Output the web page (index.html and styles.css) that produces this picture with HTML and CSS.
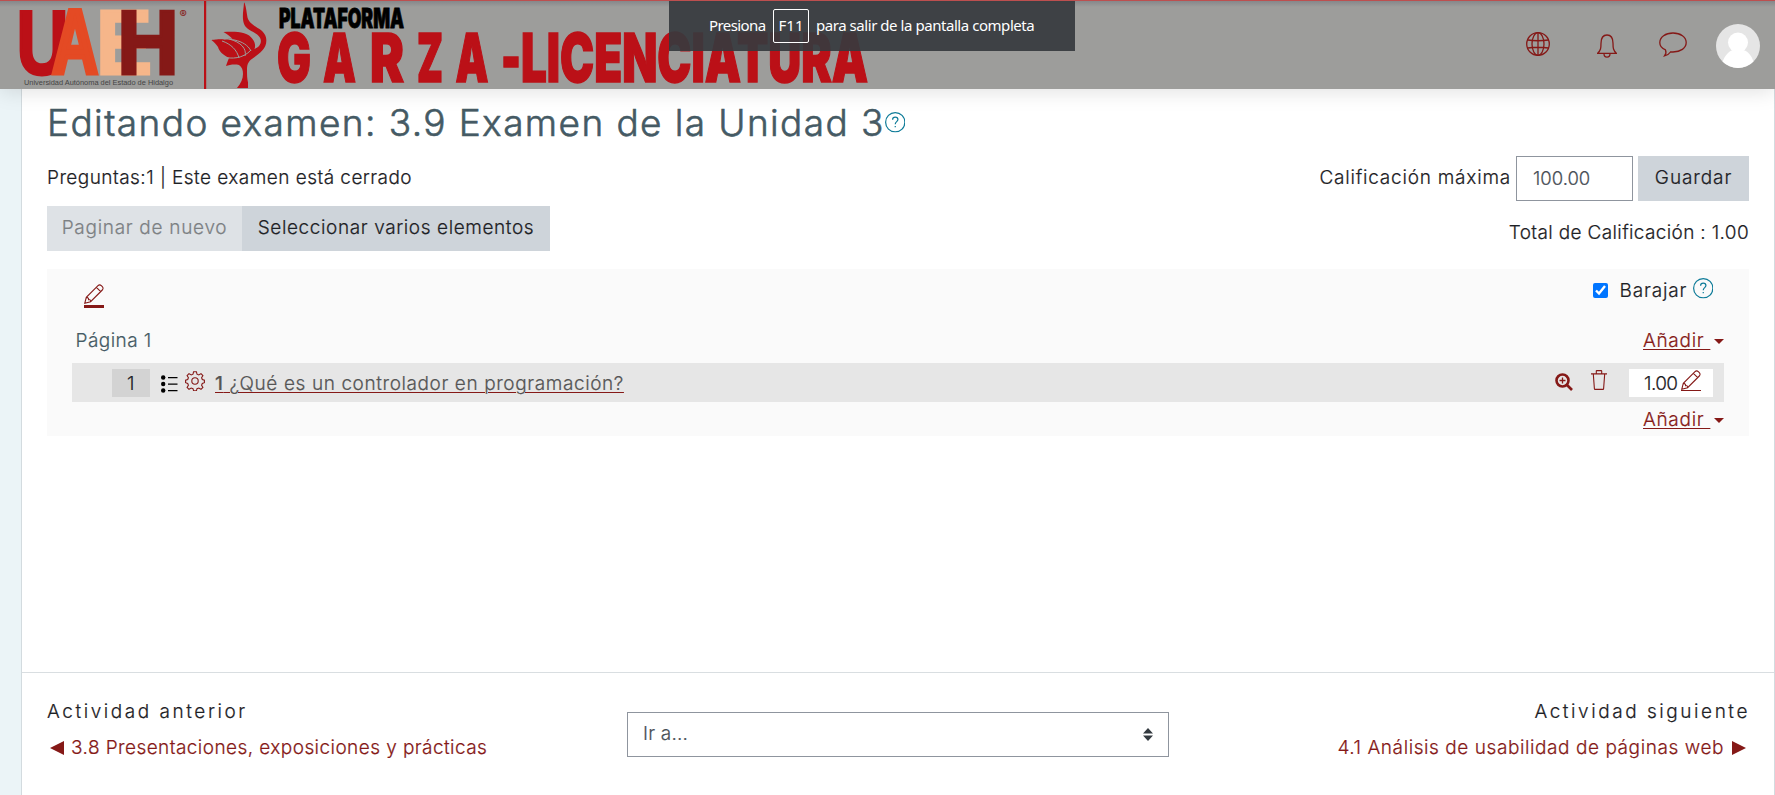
FILE: index.html
```html
<!DOCTYPE html>
<html lang="es">
<head>
<meta charset="utf-8">
<title>Editando examen: 3.9 Examen de la Unidad 3</title>
<link rel="stylesheet" href="styles.css">
</head>
<body>
<svg class="defs" aria-hidden="true">
  <symbol id="help" viewBox="0 0 20 20"><circle cx="10" cy="10" r="9.4"/><path d="M7.4 7.6C7.4 5.9 8.5 5.1 10 5.1s2.6.9 2.6 2.3c0 2-2.6 2.1-2.6 4.5M10 13.6v1.3"/></symbol>
  <symbol id="pencil" viewBox="0 0 20 20"><path d="M.8 19.200 2.300 13.400 14 1.700c1-1 2.300-1 3.300 0l1 1c1 1 1 2.300 0 3.300L6.600 17.700zM2.300 13.400q2.600.3 2.300 2.200 2-.4 2 2.100M12.400 3.300l4.300 4.300"/></symbol>
</svg>
<header class="topbar">
  <svg class="logo" width="880" height="88" viewBox="0 1 880 88">
    <g class="uaeh">
      <text class="u" x="16.500" y="73.500" textLength="52" lengthAdjust="spacingAndGlyphs">U</text>
      <text class="e" x="96" y="73.500" textLength="56" lengthAdjust="spacingAndGlyphs">E</text>
      <text class="a" x="52" y="73" textLength="46" lengthAdjust="spacingAndGlyphs">A</text>
      <text class="h" x="117" y="73.500" textLength="62" lengthAdjust="spacingAndGlyphs">H</text>
    </g>
    <text class="reg" x="179.500" y="17.500">®</text>
    <text class="motto" x="24" y="84.500" textLength="149" lengthAdjust="spacingAndGlyphs">Universidad Autónoma del Estado de Hidalgo</text>
    <rect class="red" x="204" y="1" width="2.200" height="88"/>
    <path class="red" d="M244.500 2.500c2 6 2 10 3 15 3 10 16 10 18.500 20 2 10-5 15-12 20-5 3-7 6-7 12 0 5 0 9 1 13v5.500h-11c4-5 6-9 6-14 0-4-1-7-4-9-5-1-10 0-13 1 1-3 2-6 3-8-6-3-10-7-11-11-2-3-4-5-6-6.500l-.5-.5c4-1 6-1 9-1 2 0 3 0 4 .500 4-1 6-1 8-.500-2-2-5-5-9-7 12-1 25 0 29 7 3 4 3 7 2 10 6-2 8-8 5-12-3-5-12-6-15-12-3-6-1-15-.5-22z"/>
    <path class="vein" d="M213 39c14-1 32 0 38 12M222 41c9 3 15 9 17 17M229 39c12 3 18 10 16 17M224 57c7 2 19 2 27-7"/>
    <text class="plataforma" x="279" y="28" textLength="125" lengthAdjust="spacingAndGlyphs">PLATAFORMA</text>
    <g class="garza">
      <text x="277" y="82" textLength="34" lengthAdjust="spacingAndGlyphs">G</text>
      <text x="323" y="82" textLength="33" lengthAdjust="spacingAndGlyphs">A</text>
      <text x="370" y="82" textLength="34" lengthAdjust="spacingAndGlyphs">R</text>
      <text x="417" y="82" textLength="26" lengthAdjust="spacingAndGlyphs">Z</text>
      <text x="455.500" y="82" textLength="33" lengthAdjust="spacingAndGlyphs">A</text>
      <text x="501" y="82" textLength="20" lengthAdjust="spacingAndGlyphs">-</text>
      <text x="521" y="82" textLength="347" lengthAdjust="spacingAndGlyphs">LICENCIATURA</text>
    </g>
  </svg>
  <nav class="tools">
    <svg class="tool globe" viewBox="0 0 24 24"><circle cx="12" cy="12" r="11.300"/><ellipse cx="12" cy="12" rx="6" ry="11.300"/><path d="M12 .7v22.600M1.500 8q10.500 1.500 21 0M1.500 16q10.500-1.500 21 0"/></svg>
    <svg class="tool bell" viewBox="0 0 20 24"><path d="M.7 19.300c3-3 3.300-5 3.300-10C4 4 6.500 1 10 1s6 3 6 8.300c0 5 .3 7 3.300 10zM7 19.800c0 4.500 6 4.500 6 0"/></svg>
    <svg class="tool chat" viewBox="0 0 28 25"><path d="M6.500 17.900C2.800 16.300.8 13.800.8 10.700.8 5 6.500 1 14 1s13.200 4 13.200 9.600S21.500 20 14 20h-2.500c-1.500 2.200-3.500 3.500-6 3.900 1.500-1.800 2-3.500 1-6z"/></svg>
    <svg class="avatar" viewBox="0 0 44 44"><clipPath id="c"><circle cx="22" cy="22" r="22"/></clipPath><g clip-path="url(#c)"><path fill="#e5e5e5" d="M0 0h44v44H0z"/><circle cx="22" cy="18.500" r="10" fill="#fff"/><path fill="#fff" d="M5 44c2-12 8-17 12-18h10c5 1 10 6 12 18z"/></g></svg>
  </nav>
  <div class="toast"><span class="t1">Presiona</span><kbd>F11</kbd><span class="t2">para salir de la pantalla completa</span></div>
</header>
<div class="layout">
  <aside class="rail"></aside>
  <main class="page">
    <section class="content">
      <h2 class="title"><span>Editando examen: 3.9 Examen de la Unidad 3</span><svg class="help"><use href="#help"/></svg></h2>
      <div class="controls">
        <div class="left">
          <p class="status">Preguntas:1 | Este examen está cerrado</p>
          <div class="buttons"><button class="btn off">Paginar de nuevo</button><button class="btn multi">Seleccionar varios elementos</button></div>
        </div>
        <div class="right">
          <div class="maxgrade"><label>Calificación máxima</label><input class="grade-input" value="100.00"><button class="btn save">Guardar</button></div>
          <p class="total">Total de Calificación : 1.00</p>
        </div>
      </div>
      <div class="quiz">
        <div class="quiz-head">
          <a class="edit"><svg class="pencil"><use href="#pencil"/></svg></a>
          <label class="shuffle"><input type="checkbox" checked><span>Barajar</span><svg class="help"><use href="#help"/></svg></label>
        </div>
        <div class="pagerow"><span class="pagename">Página 1</span><a class="add"><u>Añadir&nbsp;</u><i></i></a></div>
        <div class="question">
          <span class="num">1</span>
          <svg class="bullets" viewBox="0 0 17 18"><g fill="#000"><circle cx="2.200" cy="2.500" r="2.200"/><circle cx="2.200" cy="9" r="2.200"/><circle cx="2.200" cy="15.500" r="2.200"/><path d="M7 2h9.500v1.300H7zM7 8.500h9.500v1.300H7zM7 15h9.500v1.300H7z"/></g></svg>
          <svg class="gear" viewBox="0 0 20 20"><circle cx="10" cy="10" r="3.200"/><path d="M8.600.7h2.800l.6 2.500 1.800.7 2.200-1.300 1.900 1.900-1.300 2.200.7 1.800 2.100.7v2.500l-2.100.7-.7 1.800 1.300 2.200-1.900 1.900-2.200-1.300-1.800.7-.6 2.100H8.600L8 17.700l-1.800-.7L4 18.300l-1.900-1.900 1.300-2.200-.7-1.800-2.100-.7V9.200l2.100-.7.700-1.800-1.300-2.200L4 2.600l2.200 1.300L8 3.200z"/></svg>
          <a class="qname"><b>1</b> ¿Qué es un controlador en programación?</a>
          <svg class="mag" viewBox="0 0 18 18"><circle cx="7.500" cy="7.500" r="6"/><path d="m12 12 5 5"/><path class="thin" d="M4.500 7.500h6M7.500 4.500v6"/></svg>
          <svg class="trash" viewBox="0 0 16 20"><path d="M0 3.900h16M5.300 3.700V1.200q0-.6.600-.6h4.200q.6 0 .6.600v2.500M2.300 4l1.100 14.700q0 .7.700.7h7.800q.7 0 .7-.7L13.700 4"/></svg>
          <span class="mark"><span>1.00</span><a><svg class="pencil"><use href="#pencil"/></svg></a></span>
        </div>
        <div class="pagerow last"><a class="add"><u>Añadir&nbsp;</u><i></i></a></div>
      </div>
    </section>
    <footer class="activity">
      <div class="prev"><span class="cap">Actividad anterior</span><a><i class="tri back"></i><span class="l1">3.8 Presentaciones, exposiciones y prácticas</span></a></div>
      <div class="jump"><span>Ir a...</span><svg viewBox="0 0 10 13" width="10" height="13"><path fill="#343a40" d="M5 0l5 5.500H0zM5 13l5-5.500H0z"/></svg></div>
      <div class="next"><span class="cap cap2">Actividad siguiente</span><a><span class="l2">4.1 Análisis de usabilidad de páginas web</span><i class="tri fwd"></i></a></div>
    </footer>
  </main>
</div>
</body>
</html>
```
FILE: styles.css
```css
* { box-sizing: border-box; }
body { margin: 0; height: 795px; overflow: hidden; font: 300 19px/28px Inter, "Open Sans", sans-serif; letter-spacing: .45px; -webkit-text-stroke: .2px; color: #1d2125; background: #fff; }
.defs { position: absolute; width: 0; height: 0; }
p, h2 { margin: 0; }
svg { flex: none; fill: none; }
button, input { font: inherit; letter-spacing: inherit; color: inherit; border-radius: 0; }

.topbar { position: relative; z-index: 2; height: 89px; display: flex; justify-content: space-between; background: linear-gradient(#86878a, #9d9d9b 6px); border-top: 1.5px solid #bd4f4f; box-shadow: 0 2px 20px rgba(0,0,0,.13); -webkit-text-stroke: 0; }
.logo { letter-spacing: 0; overflow: visible; }
.logo text { font-family: Inter, "Liberation Sans", sans-serif; font-weight: 900; }
.logo .uaeh text { font-family: "Liberation Sans", sans-serif; font-weight: 700; font-size: 91px; stroke-width: 3; }
.u { fill: #bb1017; stroke: #bb1017; }
.logo .a { fill: #e44a24; stroke: #e44a24; }
.logo .uaeh .a { stroke-width: 5; font-size: 90px; }
.logo .e { fill: #f6b68a; stroke: #f6b68a; }
.logo .h { fill: #851917; stroke: #851917; }
.logo .reg { font-size: 11px; font-weight: 600; fill: #851917; }
.logo .motto { font-family: "Liberation Sans", sans-serif; font-size: 8px; font-weight: 400; fill: #444; }
.red { fill: #bb1017; }
.vein { stroke: #9d9d9b; stroke-width: 1; }
.logo .plataforma { font-size: 26.5px; fill: #000; stroke: #000; stroke-width: .8; }
.garza text { font-size: 68px; fill: #bb1017; stroke: #bb1017; stroke-width: 1.5; }
.tools { display: flex; padding: 22.5px 15px 0 0; }
.tool { stroke: #851917; stroke-width: 1.3; }
.globe { width: 24px; height: 24px; margin: 8.500px 47px 0 0; }
.bell { width: 20px; height: 24px; margin: 10px 42.500px 0 0; }
.chat { width: 28px; height: 25px; margin: 8.500px 29px 0 0; }
.avatar { width: 44px; height: 44px; }
.toast { position: absolute; left: 669px; top: 0; width: 406px; height: 49.5px; display: flex; align-items: center; padding: 0 0 2px 40px; background: rgba(54,57,62,.92); color: #fff; font: 400 15px/34px "Noto Sans", sans-serif; white-space: nowrap; }
.toast kbd { font: inherit; width: 36px; height: 34px; border: 1px solid #fff; border-radius: 2px; line-height: 31px; text-align: center; margin: 2px 7px 0 9px; letter-spacing: 0; }
.t1 { width: 55px; letter-spacing: -.6px; }
.t2 { letter-spacing: -.45px; }

.layout { display: flex; height: 706px; }
.rail { width: 20.5px; background: #ebf4f7; flex: none; }
.page { flex: 1; border: 1px solid #d3dbdf; border-width: 0 1px; display: flex; flex-direction: column; }
.content { height: 583px; padding: 10px 25px 0 25.5px; }
.title { display: flex; height: 46px; font-size: 37px; font-weight: 300; line-height: 47px; color: #455a64; letter-spacing: 1.4px; white-space: nowrap; -webkit-text-stroke: .6px; }
.help { width: 20.5px; height: 20.5px; stroke: #0f7c99; stroke-width: 1.2; }
.title .help { margin: 13px 0 0 0; }
.controls { display: flex; justify-content: space-between; padding-top: 10.5px; height: 125px; white-space: nowrap; }
.status { height: 50px; padding-top: 8px; }
.buttons { display: flex; }
.btn { height: 45px; padding: 0; border: 0; background: #ced4da; text-align: center; }
.off { width: 195px; background: #dee2e6; color: #7c8083; letter-spacing: .7px; }
.multi { width: 308px; letter-spacing: .6px; }
.maxgrade { display: flex; justify-content: flex-end; line-height: 44px; letter-spacing: .78px; }
.grade-input { width: 117px; height: 45px; border: 1px solid #8f959e; padding: 0 0 0 16px; margin: 0 5px 0 5px; color: #495057; background: #fff; letter-spacing: 0; font-size: 18.500px; }
.save { width: 111px; letter-spacing: .9px; }
.total { text-align: right; padding-top: 18.5px; letter-spacing: .35px; }

.quiz { margin-top: -1px; height: 167px; background: #fafafa; }
.quiz-head { display: flex; justify-content: space-between; height: 57px; padding: 0 36px 0 37px; }
.edit { width: 20px; height: 24px; margin-top: 15px; border-bottom: 3px solid #851917; }
.pencil { display: block; width: 20px; height: 20px; stroke: #851917; stroke-width: 1.1; }
.shuffle { display: flex; padding-top: 9px; height: 40px; line-height: 25px; letter-spacing: .85px; }
.shuffle input { width: 15px; height: 15px; margin: 5px 12px 0 0; accent-color: #0075ff; }
.shuffle span { width: 73px; }
.pagerow { display: flex; justify-content: space-between; height: 37px; padding: 0 25px 0 28.5px; line-height: 30px; }
.pagename { color: #455a64; }
.add { display: flex; align-items: center; height: 29px; color: #851917; letter-spacing: .7px; }
.add u { text-underline-offset: 2px; text-decoration-thickness: 1px; width: 66px; margin-right: 5px; }
.add i { border: 5px solid transparent; border-top-color: #851917; border-bottom: 0; margin-top: 1px; }
.last { justify-content: flex-end; padding-top: 3px; height: 34px; }
.question { display: flex; height: 39px; margin: 0 25px; padding: 6px 11px 0 40px; background: #e6e6e6; line-height: 29px; white-space: nowrap; }
.num { width: 38px; height: 28px; background: #d3d3d3; text-align: center; }
.bullets { width: 17px; height: 18px; margin: 6px 7px 0 11px; }
.gear { width: 20px; height: 20px; margin: 2px 10px 0 0; stroke: #851917; stroke-width: 1.1; }
.qname { color: #555; text-decoration: underline #851917 1px; text-underline-offset: 2px; flex: 1; letter-spacing: .6px; line-height: 30px; }
.qname b { font-weight: 500; }
.mag { width: 18px; height: 18px; margin: 4px 18px 0 0; stroke: #851917; stroke-width: 2.6; }
.mag .thin { stroke-width: 1.300; }
.trash { width: 16px; height: 20px; margin: 1px 22px 0 0; stroke: #851917; stroke-width: 1.100; }
.mark { display: flex; width: 84px; height: 28px; background: #fff; padding-left: 15px; }
.mark span { width: 37px; letter-spacing: -.6px; }
.mark a { height: 22px; border-bottom: 1px solid #851917; }
.mark .pencil { margin-top: 1px; }

.activity { border-top: 1px solid #d9dee1; flex: 1; display: flex; justify-content: space-between; padding: 25px 25px 0 25.5px; white-space: nowrap; }
.activity a { display: flex; align-items: center; color: #851917; height: 28px; margin-top: 8px; }
.prev, .next { width: 580px; }
.cap { display: block; letter-spacing: 2.550px; }
.cap2 { margin-right: -1px; }
.next { display: flex; flex-direction: column; align-items: flex-end; }
.tri { border: 7px solid transparent; border-width: 7px 14px; }
.back { border-right-color: #851917; border-left: 0; margin: 0 7px 0 3px; }
.fwd { border-left-color: #851917; border-right: 0; margin: 0 3px 0 8px; }
.l1 { letter-spacing: .43px; }
.l2 { letter-spacing: .57px; }
.jump { width: 542px; height: 45px; margin: 13.5px 0 0; border: 1px solid #8f959e; display: flex; justify-content: space-between; align-items: center; padding: 0 15px 0 15px; color: #495057; flex: none; letter-spacing: .2px; }
```
